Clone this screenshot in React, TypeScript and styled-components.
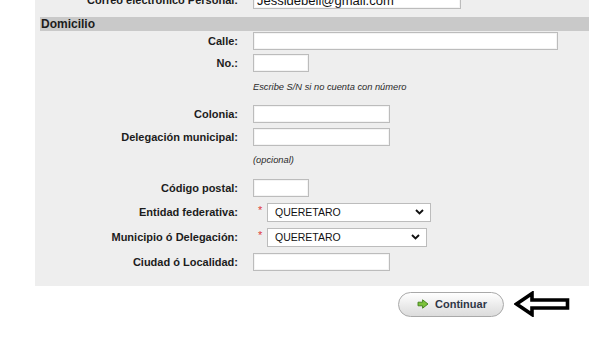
import * as React from 'react';
import styled, { createGlobalStyle } from 'styled-components';

const GlobalStyle = createGlobalStyle`
  html, body {
    margin: 0;
    padding: 0;
    background: #ffffff;
    overflow: hidden;
  }
  body {
    font-family: "Liberation Sans", Arial, sans-serif;
    color: #1c1c1c;
  }
`;

type Field = {
  label?: string;
  kind: 'input' | 'select' | 'hint';
  width?: number;
  value?: string;
  top: number;
};

const fields: Field[] = [
  { label: 'Calle:', kind: 'input', width: 305, top: 0 },
  { label: 'No.:', kind: 'input', width: 56, top: 2 },
  { kind: 'hint', value: 'Escribe S/N si no cuenta con número', top: 4 },
  { label: 'Colonia:', kind: 'input', width: 137, top: 7 },
  { label: 'Delegación municipal:', kind: 'input', width: 137, top: 3 },
  { kind: 'hint', value: '(opcional)', top: 3 },
  { label: 'Código postal:', kind: 'input', width: 56, top: 8 },
  { label: 'Entidad federativa:', kind: 'select', width: 164, value: 'QUERETARO', top: 4 },
  { label: 'Municipio ó Delegación:', kind: 'select', width: 160, value: 'QUERETARO', top: 5 },
  { label: 'Ciudad ó Localidad:', kind: 'input', width: 137, top: 5 },
];

export default function App() {
  return (
    <>
      <GlobalStyle />
      <Page>
        <Panel>
          <Row $top={0}>
            <Label>Correo electrónico Personal:</Label>
            <Cell>
              <TextBox $w={208} defaultValue="Jessidebell@gmail.com" />
            </Cell>
          </Row>
          <SectionTitle>Domicilio</SectionTitle>
          {fields.map((f, i) => (
            <Row key={i} $top={f.top}>
              <Label>{f.label}</Label>
              <Cell>
                {f.kind === 'input' && <TextBox $w={f.width} />}
                {f.kind === 'hint' && <Hint>{f.value}</Hint>}
                {f.kind === 'select' && (
                  <>
                    <Required>*</Required>
                    <SelectBox $w={f.width}>
                      <span>{f.value}</span>
                      <svg width="9" height="6" viewBox="0 0 9 6" fill="none">
                        <path d="M1 1l3.5 3.5L8 1" stroke="#111" strokeWidth="1.9" />
                      </svg>
                    </SelectBox>
                  </>
                )}
              </Cell>
            </Row>
          ))}
        </Panel>
        <Footer>
          <ContinueButton>
            <svg width="12" height="10" viewBox="0 0 12 10">
              <path d="M1 3.2h4.6V0.8L11 5 5.6 9.2V6.8H1z" fill="#7cc23a" stroke="#3f7f18" strokeWidth="0.9" />
            </svg>
            Continuar
          </ContinueButton>
          <svg width="56" height="26" viewBox="0 0 56 26">
            <path d="M2.5 13L18 2.5v6.5h35.5v8H18v6.5z" fill="none" stroke="#000" strokeWidth="3.6" strokeLinejoin="miter" />
          </svg>
        </Footer>
      </Page>
    </>
  );
}

const Page = styled.div`
  padding-left: 35px;
  margin-top: -10px;
`;

const Panel = styled.div`
  background: #eeeeee;
  padding-bottom: 14px;
`;

const Row = styled.div<{ $top: number }>`
  display: grid;
  grid-template-columns: 203px 1fr;
  column-gap: 15px;
  align-items: center;
  height: 20px;
  margin-top: ${p => p.$top}px;
`;

const Label = styled.div`
  text-align: right;
  font-size: 11px;
  font-weight: bold;
  color: #1c1c1c;
  white-space: nowrap;
`;

const Cell = styled.div`
  display: flex;
  align-items: center;
`;

const TextBox = styled.input<{ $w?: number }>`
  box-sizing: border-box;
  width: ${p => p.$w ?? 140}px;
  height: 18px;
  margin: 0;
  padding: 0 3px;
  border: 1px solid #bcbcbc;
  box-shadow: inset 0 0 0 1px #f4f4f4;
  background: #ffffff;
  font-family: "Liberation Sans", Arial, sans-serif;
  font-size: 13px;
  color: #111;
  outline: none;
`;

const Hint = styled.div`
  font-size: 9.3px;
  font-style: italic;
  color: #2a2a2a;
`;

const Required = styled.span`
  color: #e03a3a;
  font-size: 11px;
  width: 14px;
  padding-left: 5px;
  box-sizing: border-box;
  align-self: flex-start;
  line-height: 14px;
`;

const SelectBox = styled.div<{ $w?: number }>`
  box-sizing: border-box;
  width: ${p => p.$w ?? 160}px;
  height: 19px;
  border: 1px solid #bcbcbc;
  background: #ffffff;
  display: flex;
  align-items: center;
  justify-content: space-between;
  padding: 0 6px 0 7px;
  font-size: 10.5px;
  color: #111;
`;

const SectionTitle = styled.div`
  margin: 7px 0 0 5px;
  height: 14px;
  line-height: 14px;
  background: #c9c9c9;
  padding-left: 1px;
  font-size: 12px;
  font-weight: bold;
  color: #1c1c1c;
`;

const Footer = styled.div`
  display: flex;
  justify-content: flex-end;
  align-items: center;
  gap: 10px;
  padding-right: 19px;
  margin-top: 5px;
`;

const ContinueButton = styled.button`
  box-sizing: border-box;
  width: 106px;
  height: 25px;
  border-radius: 13px;
  border: 1px solid #a9a9a9;
  background: linear-gradient(#ffffff, #e9e9e9 60%, #dcdcdc);
  display: flex;
  align-items: center;
  justify-content: center;
  gap: 6px;
  padding: 0 0 0 2px;
  font-family: "Liberation Sans", Arial, sans-serif;
  font-size: 11px;
  font-weight: bold;
  color: #2f3646;
`;
